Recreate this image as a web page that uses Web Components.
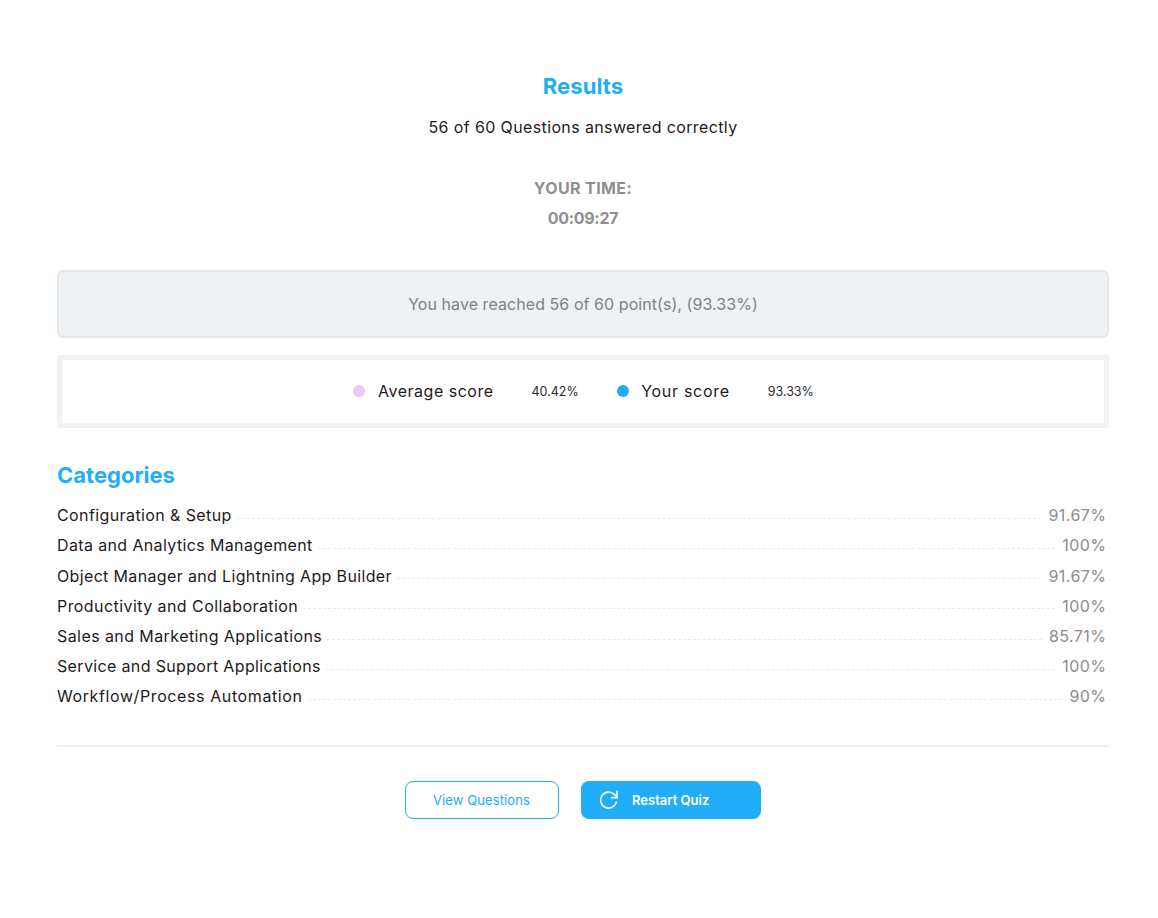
<!DOCTYPE html>
<html>
<head>
<meta charset="utf-8">
<style>
	html, body { margin: 0; background: #fff; }
	body { font-family: "Inter", "Liberation Sans", sans-serif; color: #1f1a1c; }
</style>
</head>
<body>
<quiz-results>
	<result-header></result-header>
	<points-box>You have reached 56 of 60 point(s), (93.33%)</points-box>
	<score-legend></score-legend>
	<category-list></category-list>
	<quiz-actions></quiz-actions>
</quiz-results>
<script>
const BLUE = '#22adf9';

class QuizResults extends HTMLElement {
	constructor() {
		super();
		this.attachShadow({ mode: 'open' }).innerHTML = `
<style>
	:host { display: block; box-sizing: border-box; width: 1158px; height: 918px; padding: 73px 49px 0 57px; }
</style>
<slot></slot>`;
	}
}

class ResultHeader extends HTMLElement {
	constructor() {
		super();
		this.attachShadow({ mode: 'open' }).innerHTML = `
<style>
	:host { display: flex; flex-direction: column; align-items: center; text-align: center; }
	h2 { margin: 0; font-size: 22px; line-height: 27px; font-weight: 700; color: ${BLUE}; letter-spacing: .1px; }
	p { margin: 14px 0 0; font-size: 16px; line-height: 26px; letter-spacing: .38px; }
	.time { margin-top: 33px; font-size: 16px; line-height: 30px; font-weight: 700; color: #8f8f91; }
	.label { letter-spacing: .4px; }
	.clock { letter-spacing: -.3px; }
</style>
<h2>Results</h2>
<p>56 of 60 Questions answered correctly</p>
<div class="time"><div class="label">YOUR TIME:</div><div class="clock">00:09:27</div></div>`;
	}
}

class PointsBox extends HTMLElement {
	constructor() {
		super();
		this.attachShadow({ mode: 'open' }).innerHTML = `
<style>
	:host { display: block; box-sizing: border-box; height: 68px; margin-top: 37px; border: 2px solid #e3e7ee; border-radius: 6px; background: #eef2f5; color: #7d8186; font-size: 16px; line-height: 64px; text-align: center; letter-spacing: .06px; }
</style>
<slot></slot>`;
	}
}

class ScoreLegend extends HTMLElement {
	constructor() {
		super();
		this.attachShadow({ mode: 'open' }).innerHTML = `
<style>
	:host { display: flex; box-sizing: border-box; height: 73px; margin-top: 17px; border: 5px solid #f0f2f5; border-radius: 3px; align-items: center; justify-content: center; font-size: 16px; letter-spacing: .5px; padding: 0 0 1px 1px; }
	.dot { width: 12px; height: 12px; border-radius: 50%; margin-right: 13px; }
	.val { font-size: 12.5px; margin-left: 38px; letter-spacing: 0; color: #2c2a30; padding-top: 1px; }
	.gap { width: 38.5px; }
	.you { letter-spacing: .7px; margin-left: -1px; }
</style>
<span class="dot" style="background:#e9c9f9"></span><span>Average score</span><span class="val">40.42%</span>
<span class="gap"></span>
<span class="dot" style="background:${BLUE}"></span><span class="you">Your score</span><span class="val">93.33%</span>`;
	}
}

class CategoryRow extends HTMLElement {
	constructor() {
		super();
		this.attachShadow({ mode: 'open' }).innerHTML = `
<style>
	:host { display: flex; height: 30.17px; align-items: flex-start; font-size: 16px; line-height: 26px; padding-right: 2.5px; letter-spacing: var(--track, .4px); }
	.line { flex: 1; margin: 15.8px 7px 0 5px; border-bottom: 1px dashed #e9ebee; }
	.pct { color: #8f8b8c; letter-spacing: .45px; }
</style>
<span><slot></slot></span><span class="line"></span><span class="pct"></span>`;
	}
	connectedCallback() {
		this.shadowRoot.querySelector('.pct').textContent = this.getAttribute('pct');
	}
}

class CategoryList extends HTMLElement {
	constructor() {
		super();
		const rows = [
			['Configuration & Setup', '91.67%'],
			['Data and Analytics Management', '100%', '.37px'],
			['Object Manager and Lightning App Builder', '91.67%', '.35px'],
			['Productivity and Collaboration', '100%', '.43px'],
			['Sales and Marketing Applications', '85.71%', '.42px'],
			['Service and Support Applications', '100%', '.35px'],
			['Workflow/Process Automation', '90%', '.6px'],
		];
		const root = this.attachShadow({ mode: 'open' });
		root.innerHTML = `
<style>
	:host { display: block; margin-top: 33px; padding-bottom: 31.8px; border-bottom: 2px solid #eef0f3; }
	h3 { margin: 0 0 13.2px; font-size: 22px; line-height: 28px; font-weight: 700; color: ${BLUE}; }
</style>
<h3>Categories</h3>`;
		rows.forEach(([name, pct, track]) => {
			const row = document.createElement('category-row');
			row.setAttribute('pct', pct);
			if (track) { row.style.setProperty('--track', track); }
			row.textContent = name;
			root.appendChild(row);
		});
	}
}

class QuizActions extends HTMLElement {
	constructor() {
		super();
		this.attachShadow({ mode: 'open' }).innerHTML = `
<style>
	:host { display: flex; justify-content: center; gap: 22px; margin-top: 34px; font-size: 13px; }
	.btn { box-sizing: border-box; height: 38px; border-radius: 8px; display: flex; align-items: center; font-weight: 400; }
	.outline { width: 154px; justify-content: center; border: 1px solid ${BLUE}; color: ${BLUE}; letter-spacing: .1px; padding-right: 1px; }
	.solid { width: 180px; padding-left: 18px; background: ${BLUE}; color: #fff; font-weight: 600; }
	svg { width: 20px; height: 20px; margin-right: 13px; }
</style>
<div class="btn outline">View Questions</div>
<div class="btn solid">
	<svg viewBox="0 0 20 20" fill="none" stroke="#fff" stroke-width="1.6" stroke-linecap="round" stroke-linejoin="round">
		<path d="M17.2 12.4A8 8 0 1 1 15.2 4.4L18 7.6"/>
		<path d="M18 1.2V7.8H12.4"/>
	</svg>
	Restart Quiz
</div>`;
	}
}

customElements.define('quiz-results', QuizResults);
customElements.define('result-header', ResultHeader);
customElements.define('points-box', PointsBox);
customElements.define('score-legend', ScoreLegend);
customElements.define('category-row', CategoryRow);
customElements.define('category-list', CategoryList);
customElements.define('quiz-actions', QuizActions);
</script>
</body>
</html>
